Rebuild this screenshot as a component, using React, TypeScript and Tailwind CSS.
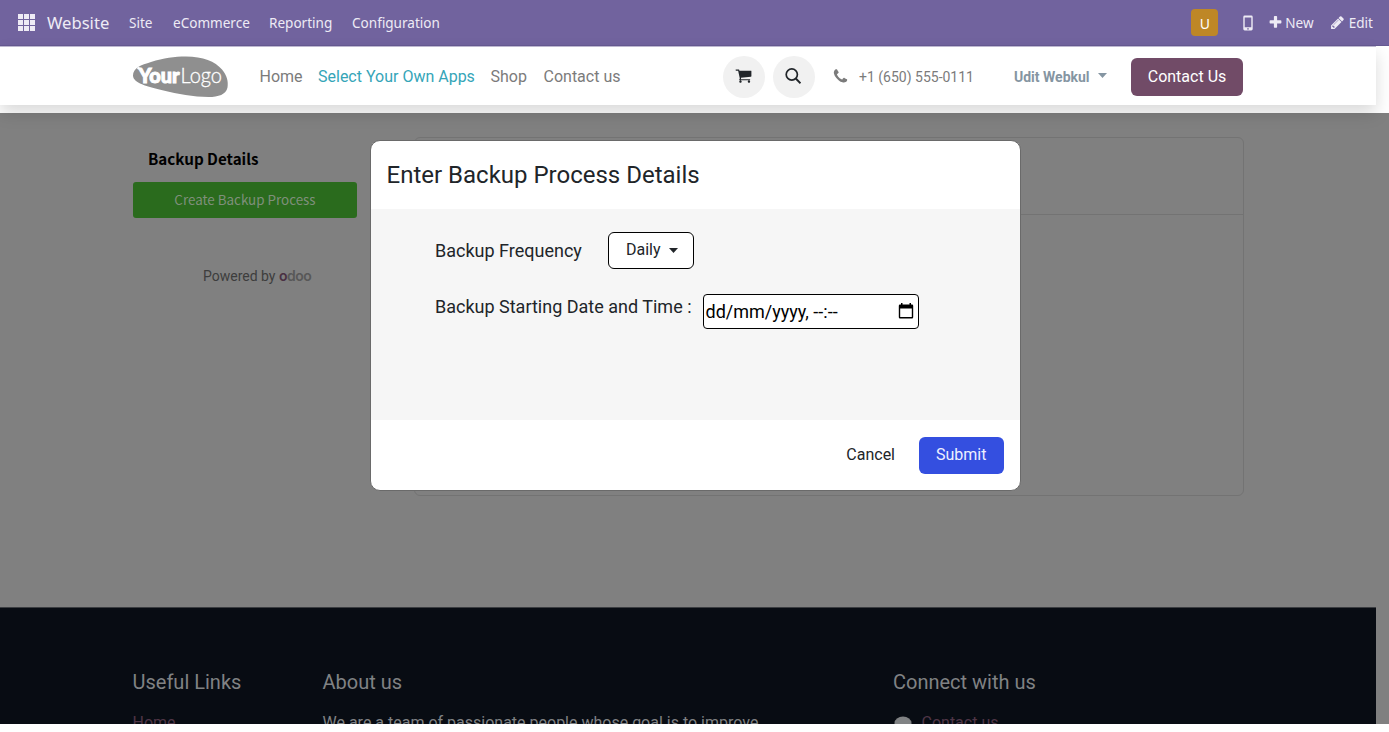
import React from "react";

const ROBOTO = "font-[Roboto,'Liberation_Sans',sans-serif]";

type IconProps = { d: string; className?: string };

function Glyph({ d, className = "" }: IconProps) {
  return (
    <svg viewBox="0 0 1792 1792" className={`shrink-0 ${className}`} fill="currentColor" aria-hidden="true">
      <path d={d} />
    </svg>
  );
}

const CART =
  "M704 1536q0 52-38 90t-90 38-90-38-38-90 38-90 90-38 90 38 38 90zm896 0q0 52-38 90t-90 38-90-38-38-90 38-90 90-38 90 38 38 90zm128-1088v512q0 24-16.5 42.5t-40.5 21.5l-1044 122q13 60 13 70 0 16-24 64h920q26 0 45 19t19 45-19 45-45 19h-1024q-26 0-45-19t-19-45q0-11 8-31.5t16-36 21.5-40 15.5-29.5l-177-823h-204q-26 0-45-19t-19-45 19-45 45-19h256q16 0 28.5 6.5t19.5 15.5 13 24.5 8 26 5.5 29.5 4.5 26h1201q26 0 45 19t19 45z";
const PHONE =
  "M1600 1240q0 27-10 70.5t-21 68.5q-21 50-122 106-94 51-186 51-27 0-53-3.5t-57.5-12.5-47-14.5-55.5-20.5-49-18q-98-35-175-83-127-79-264-216t-216-264q-48-77-83-175-3-9-18-49t-20.5-55.5-14.5-47-12.5-57.5-3.5-53q0-92 51-186 56-101 106-122 25-11 68.5-21t70.5-10q14 0 21 3 18 6 53 76 11 19 30 54t35 63.5 31 53.5q3 4 17.5 25t21.5 35.5 7 28.5q0 20-28.5 50t-62 55-62 53-28.5 46q0 9 5 22.5t8.5 20.5 14 24 11.5 19q76 137 174 235t235 174q2 1 19 11.5t24 14 20.5 8.5 22.5 5q18 0 46-28.5t53-62 55-62 50-28.5q14 0 28.5 7t35.5 21.5 25 17.5q25 15 53.5 31t63.5 35 54 30q70 35 76 53 3 7 3 21z";
const PENCIL =
  "M491 1536l91-91-235-235-91 91v107h128v128h107zm523-928q0-22-22-22-10 0-17 7l-542 542q-7 7-7 17 0 22 22 22 10 0 17-7l542-542q7-7 7-17zm-54-192l416 416-832 832h-416v-416zm683 96q0 53-37 90l-166 166-416-416 166-165q36-38 90-38 53 0 91 38l235 234q37 39 37 91z";
const PLUS =
  "M1600 736v192q0 40-28 68t-68 28h-416v416q0 40-28 68t-68 28h-192q-40 0-68-28t-28-68v-416h-416q-40 0-68-28t-28-68v-192q0-40 28-68t68-28h416v-416q0-40 28-68t68-28h192q40 0 68 28t28 68v416h416q40 0 68 28t28 68z";

function Caret({ className = "" }: { className?: string }) {
  return (
    <svg viewBox="0 0 10 5" className={`h-[5px] w-[9px] shrink-0 ${className}`} fill="currentColor" aria-hidden="true" preserveAspectRatio="none">
      <path d="M0 0h10L5 5z" />
    </svg>
  );
}

function TopBar() {
  return (
    <div className="flex h-[46px] shrink-0 items-center border-b border-[#665a92] bg-[#71639e] pl-[18px] pr-4 font-['Noto_Sans','Open_Sans',sans-serif] text-[13.55px] whitespace-nowrap text-[#eeebf5]">
      <svg viewBox="0 0 17 17" className="h-[17px] w-[17px]" fill="currentColor" aria-hidden="true">
        {[0, 6, 12].map((y) => [0, 6, 12].map((x) => <rect key={`${x}-${y}`} x={x} y={y} width="5" height="5" />))}
      </svg>
      <span className="ml-3 w-[82px] pt-px text-[16.6px]">Website</span>
      <span className="w-[44px] pt-px">Site</span>
      <span className="w-[96px] pt-px">eCommerce</span>
      <span className="w-[83px] pt-px">Reporting</span>
      <span className="pt-px">Configuration</span>
      <div className="ml-auto flex items-center">
        <span className="mr-[25px] flex h-[27px] w-[27px] items-center justify-center rounded bg-[#be8726] pt-px text-[14px] text-white">U</span>
        <svg viewBox="0 0 10 16" className="h-4 w-[10px]" aria-hidden="true">
          <path
            fill="currentColor"
            fillRule="evenodd"
            d="M1.700.5h6.600a1.400 1.400 0 0 1 1.400 1.400v12.200a1.400 1.400 0 0 1-1.400 1.400H1.700A1.400 1.400 0 0 1 .3 14.100V1.900A1.400 1.400 0 0 1 1.700.5zM1.700 2.600v9.600h6.600V2.600zM5 13.100a.8.8 0 1 0 0 1.600.8.8 0 0 0 0-1.600z"
          />
        </svg>
        <Glyph d={PLUS} className="ml-[15px] h-[15px] w-[15px]" />
        <span className="ml-0.5 w-[45px] pt-px">New</span>
        <Glyph d={PENCIL} className="h-[15px] w-[15px]" />
        <span className="ml-[3.500px] pt-px">Edit</span>
      </div>
    </div>
  );
}

function YourLogo() {
  return (
    <svg viewBox="0 0 96 42" className="h-[42px] w-[96px] shrink-0" role="img" aria-label="YourLogo">
      <path fill="#8f8f8f" d="M0 19.500C0 12 8 9 18 6 31 2 41 .5 53 .5c17 0 29 5 36 13 5 6 6.500 12 5.500 18-1.500 7-9 9.500-19 9.500-15 0-31-3-45-6.500C14 30.500 0 27 0 19.500z" />
      <circle cx="5.500" cy="12.300" r="1.200" fill="#fff" />
      <text x="5.500" y="26.500" fill="#fff" stroke="#fff" strokeWidth="1" fontFamily="Lato, sans-serif" fontWeight="900" fontSize="20" textLength="41" lengthAdjust="spacingAndGlyphs">Your</text>
      <text x="47.500" y="26.500" fill="#fff" stroke="#fff" strokeWidth=".3" fontFamily="Lato, sans-serif" fontWeight="300" fontSize="21" textLength="41.500" lengthAdjust="spacingAndGlyphs">Logo</text>
    </svg>
  );
}

function SiteHeader() {
  return (
    <header className="relative z-10 mr-[13px] flex h-[59px] shrink-0 items-center border-t border-[#bdb7d0] bg-white px-[133px] pt-px text-base whitespace-nowrap text-[#7b7b7b] shadow-[0_8px_16px_rgba(0,0,0,0.15)]">
      <YourLogo />
      <nav className="ml-[30.5px] flex">
        <a className="w-[58.500px]">Home</a>
        <a className="w-[172.500px] text-[#35a5b8]">Select Your Own Apps</a>
        <a className="w-[53px]">Shop</a>
        <a>Contact us</a>
      </nav>
      <div className="ml-auto flex items-center">
        <span className="flex h-[42px] w-[42px] items-center justify-center rounded-full bg-[#f1f1f1] text-[#212529]">
          <Glyph d={CART} className="mb-[2px] mr-px h-[17px] w-[17px]" />
        </span>
        <span className="ml-2 flex h-[42px] w-[42px] items-center justify-center rounded-full bg-[#f1f1f1] text-[#212529]">
          <svg viewBox="0 0 16 16" className="mb-[2px] mr-px h-4 w-4" fill="none" stroke="currentColor" strokeWidth="1.700" aria-hidden="true">
            <circle cx="6.800" cy="6.500" r="5.600" />
            <path d="M10.800 10.500l4.700 4.800" strokeWidth="2" />
          </svg>
        </span>
        <Glyph d={PHONE} className="ml-[17.500px] mb-px h-[17px] w-[17px]" />
        <span className="ml-[10px] w-[155px] pt-px text-[14px]">+1 (650) 555-0111</span>
        <span className="w-[84px] pt-px text-[14px] font-bold text-[#8595a2]">Udit Webkul</span>
        <Caret className="mb-[3px] text-[#8595a2]" />
        <a className="ml-6 flex h-[38px] w-[112px] items-center justify-center rounded-md bg-[#714b67] text-white">Contact Us</a>
      </div>
    </header>
  );
}

function Sidebar() {
  return (
    <aside className="flex w-[224px] flex-col font-['Noto_Sans_CJK_SC',sans-serif]">
      <h2 className="ml-[15px] mt-[33px] text-[15.2px] leading-6 font-bold text-black">Backup Details</h2>
      <button className="mt-[12px] h-9 rounded-[3px] bg-[#2a6b1d] pb-0.5 text-[13.4px] leading-[34px] text-[#7f8f7b]">Create Backup Process</button>
      <div className={`ml-[70px] mt-[48px] flex items-baseline text-sm leading-5 text-[#3d3d3d] ${ROBOTO}`}>
        <span className="w-[76px]">Powered by</span>
        <span className="font-[Inter,sans-serif] text-[14px] leading-5 font-semibold tracking-[-0.5px] text-[#585858]">
          <span className="text-[#4a3043]">o</span>doo
        </span>
      </div>
    </aside>
  );
}

function Footer() {
  return (
    <footer className="mr-[13px] flex h-[117px] shrink-0 overflow-hidden border-t border-[#3b3d41] bg-[#080c13] pl-[132.500px] pt-[60px] whitespace-nowrap text-[#808284]">
      <div className="w-[190px]">
        <h5 className="text-[20px] leading-[29px]">Useful Links</h5>
        <a className="mt-[14px] block text-base leading-6 text-[#503647]">Home</a>
      </div>
      <div className="w-[570.500px]">
        <h5 className="text-[20px] leading-[29px]">About us</h5>
        <p className="mt-[14px] text-base leading-6">We are a team of passionate people whose goal is to improve</p>
      </div>
      <div>
        <h5 className="text-[20px] leading-[29px]">Connect with us</h5>
        <div className="mt-[14px] flex text-base leading-6 text-[#503647]">
          <svg viewBox="0 0 18 16" className="mt-[5px] ml-[1px] h-4 w-[18px] text-[#808284]" aria-hidden="true">
            <ellipse cx="9" cy="7" rx="8.500" ry="6.500" fill="currentColor" />
          </svg>
          <span className="ml-[9.500px]">Contact us</span>
        </div>
      </div>
    </footer>
  );
}

function BackupDialog() {
  return (
    <section
      role="dialog"
      className="absolute left-[370px] top-[140px] z-30 flex h-[351px] w-[650.5px] flex-col overflow-hidden rounded-[10px] border border-[#6a6a6a] bg-white whitespace-nowrap text-[#212529]"
    >
      <h4 className="flex h-[68px] shrink-0 items-center pl-[15.500px] text-[24px]">Enter Backup Process Details</h4>
      <div className="flex h-[211px] shrink-0 flex-col bg-[#f6f6f6] pl-16 pt-[23px] text-[18px]">
        <div className="flex h-[37px] items-center">
          <label className="w-[173px] pb-px">Backup Frequency</label>
          <button className="flex h-[37px] w-[86px] items-center rounded-md border border-black bg-white pb-px pl-[17px] text-base">
            Daily
            <Caret className="ml-2" />
          </button>
        </div>
        <div className="mt-[25px] flex items-start">
          <label className="w-[268px] leading-[26px]">Backup Starting Date and Time :</label>
          <div className="flex h-[35px] w-[216px] items-center rounded border border-black bg-white pb-px pl-[1.500px] pr-1 text-black">
            <span>dd/mm/yyyy, --:--</span>
            <svg viewBox="0 0 16 16" className="ml-auto h-4 w-4" aria-hidden="true">
              <path
                fill="currentColor"
                fillRule="evenodd"
                d="M3 0h1.500v1.500h7V0H13v1.500h1A1.200 1.200 0 0 1 15.200 2.700v11.600a1.200 1.200 0 0 1-1.200 1.200H2a1.200 1.200 0 0 1-1.200-1.200V2.700A1.200 1.200 0 0 1 2 1.500h1zM2.200 5.400v8.700h11.600V5.400z"
              />
            </svg>
          </div>
        </div>
      </div>
      <div className="flex flex-1 items-center justify-end pr-4 text-base">
        <button className="mr-6">Cancel</button>
        <button className="h-[37px] w-[84.500px] rounded-md bg-[#344fe0] text-[#eef0ff]">Submit</button>
      </div>
    </section>
  );
}

export default function App() {
  return (
    <div className={`relative flex h-[732px] w-[1389px] flex-col overflow-hidden bg-white ${ROBOTO}`}>
      <TopBar />
      <SiteHeader />
      <div className="mt-2 flex h-[611px] shrink-0 flex-col bg-[#808080]">
        <main className="flex flex-1 pl-[133px]">
          <Sidebar />
          <div className="ml-[57px] mt-6 h-[359px] w-[830px] rounded-md border border-[#737373]">
            <div className="h-[77px] border-b border-[#737373]" />
          </div>
        </main>
        <Footer />
      </div>
      <BackupDialog />
    </div>
  );
}
